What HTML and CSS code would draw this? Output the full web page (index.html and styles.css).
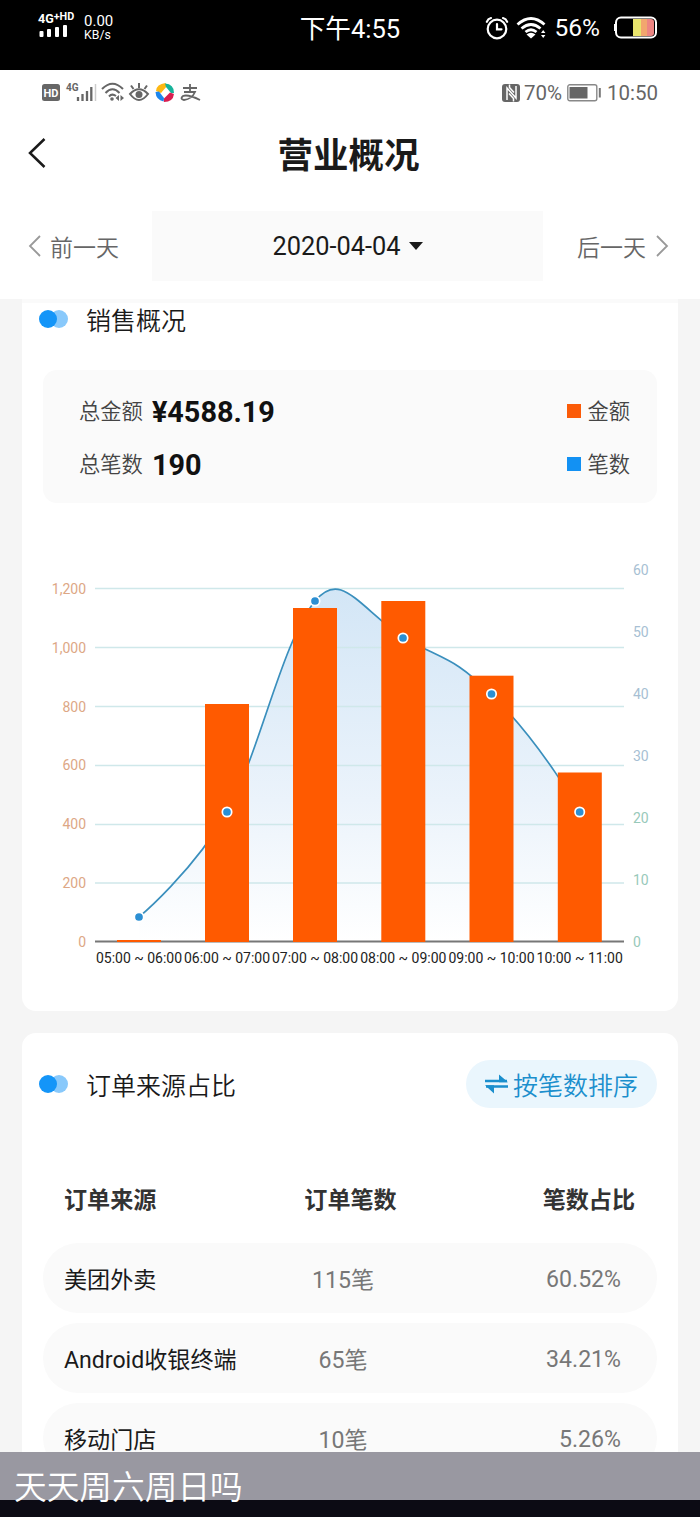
FILE: index.html
```html
<!DOCTYPE html>
<html lang="zh-CN">
<head>
    <meta charset="UTF-8">
    <meta name="viewport" content="width=device-width, initial-scale=1.0">
    <title>营业概况</title>
    <link rel="stylesheet" href="styles.css">
</head>
<body>
    <div class="phone">
        <div class="player-bar">
            <div class="signal">
                <div class="network">4G<sup>+HD</sup></div>
                <svg width="30" height="13" viewBox="0 0 30 13" fill="#fff"><rect x="1.500" y="6" width="4" height="6" rx="1"/><rect x="9" y="4" width="4" height="8" rx="1"/><rect x="17" y="2" width="4" height="10" rx="1"/><rect x="25" y="0" width="4" height="12" rx="1"/></svg>
            </div>
            <div class="speed">0.00<br><small>KB/s</small></div>
            <div class="player-time">下午4:55</div>
            <div class="player-right">
                <svg class="alarm" width="24" height="24" viewBox="0 0 24 24" fill="none" stroke="#fff" stroke-width="2.2" stroke-linecap="round"><circle cx="12" cy="13" r="9.300"/><path d="M12 8v5.300h4.500M1.800 5.800Q3 2.800 6 2M22.200 5.800Q21 2.800 18 2"/></svg>
                <svg class="wifi" width="31" height="24" viewBox="0 0 31 24" fill="none" stroke="#fff" stroke-width="2.800"><path d="M1.500 8.500Q15 -3.500 28.500 8.500M5.500 12.500Q15 4.500 24.500 12.500M9.500 16Q15 11.500 20.500 16"/><path d="M10.500 18.500Q15 15 19.500 18.500L15 22.500z" fill="#fff" stroke="none"/><path d="M25 17l2.200-3 2.200 3zM25 19l2.200 3 2.200-3z" fill="#fff" stroke="none"/></svg>
                <span>56%</span>
                <svg class="battery" width="44" height="23" viewBox="0 0 44 23"><path d="M19 3h8v17h-8z" fill="#e9e46c"/><path d="M27 3h6v17h-6z" fill="#f2a66e"/><path d="M33 3h4q3 0 3 3v11q0 3-3 3h-4z" fill="#ed8582"/><rect x="2" y="1.500" width="40" height="20" rx="5" fill="none" stroke="#fff" stroke-width="2"/><path d="M1 8v7" stroke="#fff" stroke-width="2"/></svg>
            </div>
        </div>

        <div class="status-bar">
            <div class="status-left">
                <svg width="160" height="22" viewBox="0 0 160 22">
                    <!-- HD -->
                    <rect x="0" y="2" width="18" height="17" rx="2.500" fill="#666"/>
                    <text x="9" y="14.500" class="hd">HD</text>
                    <!-- signal -->
                    <text x="24" y="9" class="g4">4G</text>
                    <path d="M36 15v4M40.500 12v7M45 9v10M49.300 5v14" stroke="#666" stroke-width="2.300"/>
                    <path d="M53.500 2v17" stroke="#ccc" stroke-width="1.500"/>
                    <!-- wifi -->
                    <path d="M60 7Q70.500-3.500 81 7M63.500 11Q70.500 3.500 77.500 11M67 14.500Q70 11 74 14" fill="none" stroke="#666" stroke-width="2"/>
                    <circle cx="70" cy="17" r="1.800" fill="#666"/>
                    <path d="M73.500 16l3.500-3v6zM82 16l-3.500-3v6z" fill="#666"/>
                    <!-- eye -->
                    <path d="M88 12Q97 2.500 106 12Q97 24 88 12z" fill="none" stroke="#666" stroke-width="2"/>
                    <circle cx="97" cy="12.500" r="3.500" fill="#666"/>
                    <path d="M97 1v5M89 3.500l2.500 3.500M105 3.500l-2.500 3.500" stroke="#666" stroke-width="2"/>
                    <!-- browser -->
                    <path d="M114 9Q114.500 2 123.500 1L125 4L119 11z" fill="#fdb813"/>
                    <path d="M123 1.500Q132 2 132 11L129 11L124 5z" fill="#16b39a"/>
                    <path d="M132 12Q131 20 122 20L121.500 17L128 10.500z" fill="#d81e50"/>
                    <path d="M121.500 19.500Q114 18 113.500 10L117 9.500L122 16z" fill="#1c86ee"/>
                    <!-- alipay -->
                    <path d="M141 6h14M148 2V10M142 10h11Q150 17 142 18Q137.500 17 141 14Q146 12 158 18" fill="none" stroke="#666" stroke-width="1.800"/>
                </svg>
            </div>
            <div class="status-right">
                <svg width="19" height="20" viewBox="0 0 19 20"><rect x="0" y="1" width="18" height="18" rx="3" fill="#666"/><path d="M5 17V5l9 10V3M7.500 1.500v3L12 9.500M11.500 18.500v-3L7 10.500" fill="none" stroke="#fff" stroke-width="1.500"/></svg>
                <span>70%</span>
                <svg class="battery-small" width="34" height="18" viewBox="0 0 34 18"><rect x=".8" y=".8" width="29" height="16" rx="2" fill="none" stroke="#888" stroke-width="1.400"/><rect x="2.500" y="3" width="18" height="11.500" fill="#666"/><path d="M32.800 4v9.500" stroke="#777" stroke-width="2"/></svg>
                <span>10:50</span>
            </div>
        </div>

        <div class="title-bar">
            <svg class="back" width="18" height="30" viewBox="0 0 18 30"><path d="M16.500 1L2 15l14.500 14" fill="none" stroke="#1a1a1a" stroke-width="2.500"/></svg>
            <h1>营业概况</h1>
        </div>

        <div class="date-bar">
            <div class="day prev">
                <svg width="13" height="22" viewBox="0 0 13 22"><path d="M12 1L2 11l10 10" fill="none" stroke="#999" stroke-width="1.800"/></svg>
                <span>前一天</span>
            </div>
            <div class="date">2020-04-04<i class="caret"></i></div>
            <div class="day next">
                <span>后一天</span>
                <svg width="13" height="22" viewBox="0 0 13 22"><path d="M1 1l10 10L1 21" fill="none" stroke="#999" stroke-width="1.800"/></svg>
            </div>
        </div>

        <div class="content">
            <div class="card sales">
                <div class="card-title"><i class="dots"></i><h2>销售概况</h2></div>
                <div class="summary">
                    <div class="row"><span class="label">总金额</span><b>¥4588.19</b><span class="legend"><i class="orange"></i><span>金额</span></span></div>
                    <div class="row"><span class="label">总笔数</span><b>190</b><span class="legend"><i class="blue"></i><span>笔数</span></span></div>
                </div>
                <svg class="chart" width="656" height="440" viewBox="22 540 656 440">
                    <defs>
                        <linearGradient id="area" x1="0" y1="0" x2="0" y2="1">
                            <stop offset="0" stop-color="#d3e6f6"/>
                            <stop offset="0.6" stop-color="#ebf3fb"/>
                            <stop offset="1" stop-color="#fff"/>
                        </linearGradient>
                    </defs>
                    <path fill="url(#area)" d="M139 917C139 917 194 871 227 812C260 752 281 644 315 601C340 571 355 602 403 638C449 662 454 658 491 694C543 745 580 812 580 812V941H139z"/>
                    <path class="grid" d="M95 588.500H624M95 647.500H624M95 706.500H624M95 765.500H624M95 824.500H624M95 883H624"/>
                    <path class="line" d="M139 917C139 917 194 871 227 812C260 752 281 644 315 601C340 571 355 602 403 638C449 662 454 658 491 694C543 745 580 812 580 812"/>
                    <path class="axis" d="M95 941.500H624"/>
                    <g class="bars">
                        <rect x="117" y="940" width="44" height="2"/>
                        <rect x="205" y="704" width="44" height="238"/>
                        <rect x="293" y="608" width="44" height="334"/>
                        <rect x="381.300" y="601" width="44" height="341"/>
                        <rect x="469.500" y="675.700" width="44" height="266.300"/>
                        <rect x="557.800" y="772.500" width="44" height="169.500"/>
                    </g>
                    <g class="points">
                        <circle cx="139" cy="917" r="4.700"/>
                        <circle cx="227" cy="812" r="4.700"/>
                        <circle cx="315" cy="601" r="4.700"/>
                        <circle cx="403" cy="638" r="4.700"/>
                        <circle cx="491.500" cy="694" r="4.700"/>
                        <circle cx="579.700" cy="812" r="4.700"/>
                    </g>
                    <g class="left-axis">
                        <text x="86" y="593.500">1,200</text>
                        <text x="86" y="652.500">1,000</text>
                        <text x="86" y="711.500">800</text>
                        <text x="86" y="769.500">600</text>
                        <text x="86" y="828.500">400</text>
                        <text x="86" y="887.500">200</text>
                        <text x="86" y="946.500">0</text>
                    </g>
                    <g class="right-axis">
                        <text x="633" y="574.500">60</text>
                        <text x="633" y="637">50</text>
                        <text x="633" y="698.500">40</text>
                        <text x="633" y="760.500">30</text>
                        <text x="633" y="822.500" class="green">20</text>
                        <text x="633" y="884.500" class="green">10</text>
                        <text x="633" y="946.500" class="green">0</text>
                    </g>
                    <g class="x-axis">
                        <text x="139" y="962.500">05:00 ~ 06:00</text>
                        <text x="227" y="962.500">06:00 ~ 07:00</text>
                        <text x="315" y="962.500">07:00 ~ 08:00</text>
                        <text x="403.300" y="962.500">08:00 ~ 09:00</text>
                        <text x="491.500" y="962.500">09:00 ~ 10:00</text>
                        <text x="579.700" y="962.500">10:00 ~ 11:00</text>
                    </g>
                </svg>
            </div>

            <div class="card orders">
                <div class="card-title">
                    <i class="dots"></i><h2>订单来源占比</h2>
                    <div class="sort">
                        <svg width="23" height="20" viewBox="0 0 23 20"><path d="M0 7h22M1 12.500h22" stroke="#1b8fcd" stroke-width="2.600"/><path d="M14 .5L23 8.300h-9zM9 19.500L0 11.200h9z" fill="#1b8fcd"/></svg>
                        <span>按笔数排序</span>
                    </div>
                </div>
                <div class="table">
                    <div class="tr head"><span>订单来源</span><span>订单笔数</span><span>笔数占比</span></div>
                    <div class="tr"><span>美团外卖</span><span>115笔</span><span>60.52%</span></div>
                    <div class="tr"><span>Android收银终端</span><span>65笔</span><span>34.21%</span></div>
                    <div class="tr"><span>移动门店</span><span>10笔</span><span>5.26%</span></div>
                </div>
            </div>
        </div>

        <div class="caption"><span>天天周六周日吗</span></div>
    </div>
</body>
</html>
```
FILE: styles.css
```css
* {
    box-sizing: border-box;
}
body {
    margin: 0;
    font-family: Roboto, "Noto Sans CJK SC", sans-serif;
    color: #1a1a1a;
    background: #fff;
}
h1, h2 {
    margin: 0;
}
svg {
    display: block;
    flex: none;
}
.phone {
    position: relative;
    width: 700px;
    height: 1517px;
    overflow: hidden;
    display: flex;
    flex-direction: column;
}

/* black bar on top */
.player-bar {
    height: 70px;
    flex: none;
    background: #000;
    color: #fff;
    display: flex;
    align-items: flex-start;
}
.signal {
    width: 46px;
    margin-left: 38px;
    padding-top: 13px;
}
.network {
    font-size: 12.5px;
    line-height: 12px;
    font-weight: bold;
    white-space: nowrap;
    display: flex;
}
.network sup {
    font-size: 10.8px;
    line-height: 8px;
}
.speed {
    width: 60px;
    padding-top: 15px;
    font-size: 15px;
    line-height: 13px;
}
.speed small {
    font-size: 12.3px;
}
.player-time {
    width: 260px;
    padding: 12px 0 0;
    margin-left: 76px;
    margin-right: -76px;
    text-align: center;
    font-size: 25.6px;
    line-height: 34px;
    white-space: nowrap;
}
.player-right {
    margin-left: auto;
    margin-right: 42px;
    height: 55px;
    display: flex;
    align-items: center;
    font-size: 24.5px;
}
.alarm {
    margin-right: 7px;
}
.wifi {
    margin-right: 8px;
}
.battery {
    margin-left: 14px;
}

/* status bar of the phone */
.status-bar {
    height: 45px;
    flex: none;
    display: flex;
    justify-content: space-between;
    align-items: center;
    padding: 0 42px;
    color: #666;
    font-size: 20.5px;
}
.status-right {
    display: flex;
    align-items: center;
}
.status-right span {
    margin-left: 3px;
}
.battery-small {
    margin: 0 3px 0 5px;
}
.hd {
    font-size: 11px;
    font-weight: bold;
    fill: #fff;
    text-anchor: middle;
}
.g4 {
    font-size: 10px;
    font-weight: bold;
    fill: #666;
}

.title-bar {
    height: 96px;
    flex: none;
    display: flex;
    align-items: center;
    padding: 0 28px 20px;
}
.title-bar h1 {
    flex: 1;
    text-align: center;
    padding: 5px 21px 0 0;
    font-size: 35.5px;
    line-height: 44px;
}
.date-bar {
    height: 88px;
    flex: none;
    display: flex;
    align-items: flex-start;
    padding: 0 28px;
}
.day {
    height: 70px;
    display: flex;
    align-items: center;
    font-size: 23px;
    font-weight: 350;
    color: #666;
}
.prev {
    width: 124px;
    gap: 9px;
}
.next {
    flex: 1;
    justify-content: flex-end;
    gap: 10px;
    padding-right: 3px;
}
.date {
    width: 391px;
    height: 70px;
    display: flex;
    align-items: center;
    justify-content: center;
    background: #fafafa;
    font-size: 25.4px;
}
.caret {
    margin-left: 8px;
    border: 7px solid transparent;
    border-top: 8px solid #1a1a1a;
    border-bottom: 0;
}

.content {
    flex: 1;
    background: #f5f5f5;
    padding: 0 22px;
}
.card {
    background: #fff;
    overflow: hidden;
}
.sales {
    height: 712px;
    border-top: 4px solid #fafafa;
    border-radius: 0 0 14px 14px;
}
.orders {
    height: 520px;
    margin-top: 22px;
    border-radius: 14px;
}
.card-title {
    display: flex;
    align-items: center;
    padding: 0 21px 0 17px;
}
.sales .card-title {
    height: 32px;
}
.orders .card-title {
    height: 102px;
}
.card-title h2 {
    margin-left: 18px;
    padding-top: 5px;
    font-size: 25px;
    line-height: 34px;
    font-weight: 350;
}
.dots {
    width: 29px;
    height: 18px;
    display: flex;
}
.dots::before, .dots::after {
    content: "";
    width: 18px;
    height: 18px;
    border-radius: 50%;
    background: #1495f8;
}
.dots::after {
    margin-left: -7px;
    background: #6bbcfa;
    opacity: 0.8;
}
.dots::before {
    position: relative;
    z-index: 1;
}

.summary {
    height: 133px;
    margin: 35px 21px 0;
    padding: 15px 27px 0 36px;
    border-radius: 14px;
    background: #fafafa;
}
.row {
    height: 53px;
    display: flex;
    align-items: center;
}
.label, .legend {
    font-size: 21.3px;
    line-height: 30px;
    font-weight: 350;
    color: #444;
}
.label, .legend span {
    padding-top: 1px;
}
.row b {
    margin-left: 9px;
    font-size: 28.8px;
    color: #111;
}
.legend {
    margin-left: auto;
    display: flex;
    align-items: center;
}
.legend i {
    width: 14px;
    height: 14px;
    margin: -2px 6px 0 0;
}
.orange {
    background: #fb5b08;
}
.blue {
    background: #1291f3;
}

/* chart */
.chart {
    margin-top: 37px;
}
.grid {
    fill: none;
    stroke: #cfe8ea;
    stroke-width: 1.5;
}
.line {
    fill: none;
    stroke: #3a8fbd;
    stroke-width: 1.7;
}
.axis {
    stroke: #777;
    stroke-width: 1.8;
}
.bars {
    fill: #ff5a00;
}
.points {
    fill: #2c8fd3;
    stroke: #fff;
    stroke-width: 1.7;
}
.chart text {
    font-size: 14px;
}
.left-axis {
    fill: #dda785;
    text-anchor: end;
}
.right-axis {
    fill: #a7bfd3;
}
.right-axis .green {
    fill: #98c9ba;
}
.x-axis {
    fill: #222;
    text-anchor: middle;
}

.sort {
    width: 191px;
    height: 48px;
    margin-left: auto;
    display: flex;
    align-items: center;
    justify-content: center;
    gap: 5px;
    border-radius: 24px;
    background: #eaf6fd;
    color: #1b8fcd;
    font-size: 25px;
    line-height: 34px;
    font-weight: 350;
}
.sort span {
    padding-top: 5px;
}
.table {
    padding: 28px 21px 0;
}
.tr {
    height: 70px;
    margin-bottom: 10px;
    padding: 0 22px 0 21px;
    display: grid;
    grid-template-columns: 200px 158px 1fr;
    align-items: center;
    border-radius: 35px;
    background: #fafafa;
    font-size: 23.1px;
    white-space: nowrap;
}
.tr span:nth-child(2) {
    text-align: center;
}
.tr span:nth-child(3) {
    text-align: right;
    padding: 2px 14px 0 0;
}
.tr:not(.head) span:nth-child(n+2) {
    color: #777;
}
.tr.head {
    background: none;
    color: #333;
    font-weight: bold;
}
.tr.head span:nth-child(2) {
    padding-left: 15px;
}
.tr.head span:nth-child(3) {
    padding: 0;
}

/* caption lies over the bottom of the page */
.caption {
    position: absolute;
    left: 0;
    right: 0;
    bottom: 0;
    height: 65px;
    padding: 12px 0 0 14px;
    background: rgba(147, 146, 155, 0.94);
    border-bottom: 17px solid #0c0b14;
    color: #fff;
    font-size: 32.7px;
    line-height: 48px;
    font-weight: 350;
}
```
